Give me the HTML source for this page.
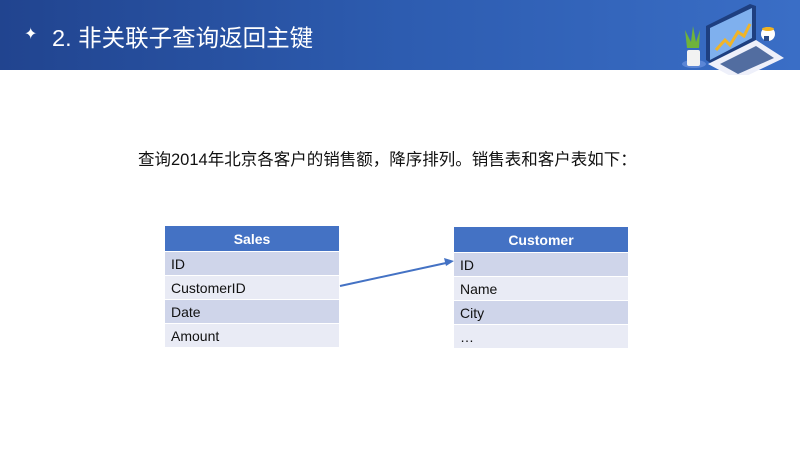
<!DOCTYPE html><html><head><meta charset="utf-8"><style>
body{margin:0;width:800px;height:450px;background:#fff;position:relative;overflow:hidden;font-family:"Liberation Sans","Noto Sans CJK SC",sans-serif}
.hd{position:absolute;left:0;top:0;width:800px;height:70px;background:linear-gradient(90deg,#21448f,#2d5cb0 50%,#3a6ec6)}
.t{position:absolute;left:52px;top:19px;color:#fff;font-size:23.5px}
.s{position:absolute;left:24px;top:24px;color:#fff;font-size:16px}
.q{position:absolute;left:138px;top:146px;font-size:16.5px;color:#111}
table{position:absolute;border-collapse:separate;border-spacing:0;width:174px;font-size:14px}
td{height:23px;padding:0 6px;border-bottom:1px solid #fff;color:#111}
th{height:23px;background:#4472c4;color:#fff;font-size:14px;border-bottom:1px solid #fff}
.o{background:#cfd5ea}.e{background:#e9ebf5}
</style></head><body>
<div class="hd"></div><div class="s">✦</div><div class="t">2. 非关联子查询返回主键</div>
<svg style="position:absolute;left:670px;top:0" width="130" height="75">
<ellipse cx="24" cy="64" rx="12" ry="4" fill="#5b86d6"/>
<path d="M17 48 L15 30 L21 42 L23 26 L26 42 L30 30 L29 48Z" fill="#6fb33a"/>
<rect x="17" y="50" width="13" height="16" rx="2" fill="#f2f2f2"/>
<path d="M36 26 L80 4 L86 6 L86 40 L42 64 L36 60Z" fill="#1e3f80"/>
<path d="M40 28 L82 8 L82 38 L40 60Z" fill="#7fb0ee"/>
<path d="M46 50 L55 40 L60 45 L68 32 L74 36 L80 24" stroke="#f0b428" stroke-width="3" fill="none"/>
<path d="M38 64 L86 40 L114 58 L68 80Z" fill="#eef0fa"/>
<path d="M50 64 L86 46 L104 58 L68 74Z" fill="#2a4c8a" opacity=".8"/>
<circle cx="98" cy="34" r="7" fill="#fff"/><ellipse cx="98" cy="29" rx="6" ry="2" fill="#f1b21e"/><rect x="94" y="36" width="5" height="5" fill="#2a4c8a"/>
</svg>
<div class="q">查询2014年北京各客户的销售额，降序排列。销售表和客户表如下：</div>
<table style="left:165px;top:226px"><tr><th>Sales</th></tr><tr><td class="o">ID</td></tr><tr><td class="e">CustomerID</td></tr><tr><td class="o">Date</td></tr><tr><td class="e">Amount</td></tr></table>
<table style="left:454px;top:227px"><tr><th>Customer</th></tr><tr><td class="o">ID</td></tr><tr><td class="e">Name</td></tr><tr><td class="o">City</td></tr><tr><td class="e">…</td></tr></table>
<svg style="position:absolute;left:0;top:0" width="800" height="450"><line x1="340" y1="286" x2="446" y2="263" stroke="#4472c4" stroke-width="2"/><path d="M454 261 L444 258 L446 266Z" fill="#4472c4"/></svg>
</body></html>
